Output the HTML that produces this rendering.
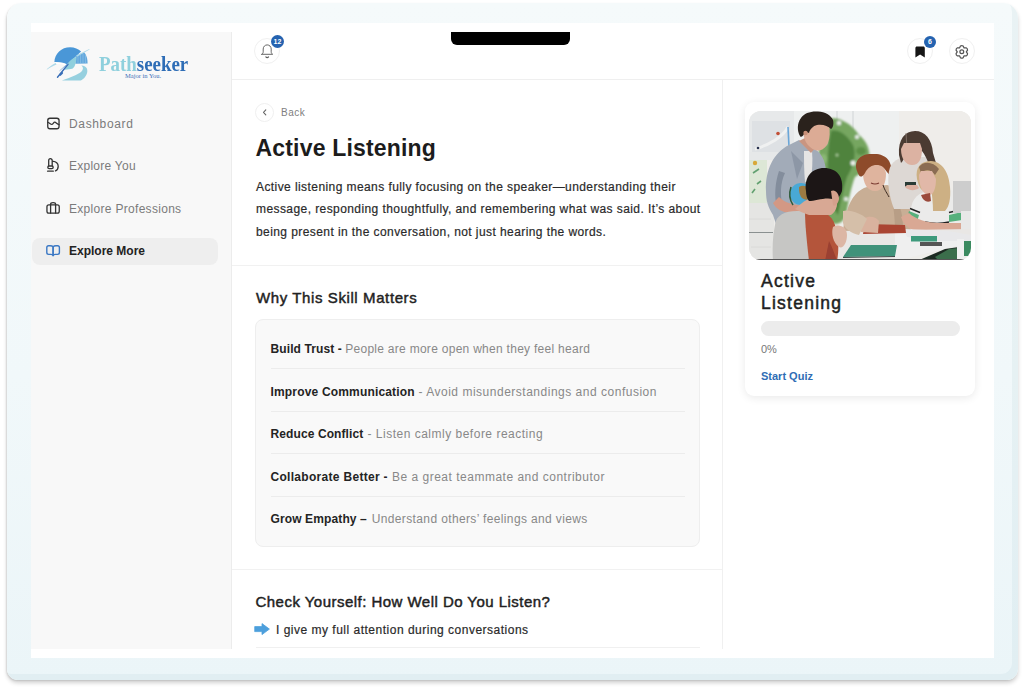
<!DOCTYPE html>
<html><head><meta charset="utf-8">
<style>
*{box-sizing:border-box;margin:0;padding:0}
html,body{width:1024px;height:690px;overflow:hidden;background:#fff;font-family:"Liberation Sans",sans-serif;color:#222}
.abs{position:absolute}
#frame{left:7px;top:3px;width:1011px;height:677px;border-radius:15px 15px 11px 11px;background:linear-gradient(#f5fafb,#f1f8fa 55%,#ebf5f8);
 box-shadow:0 3px 4px rgba(0,0,0,.18),-1px 1px 1.5px rgba(0,0,0,.09), inset -6px -6px 0 rgba(170,200,210,.15)}
#screen{left:31px;top:23px;width:963px;height:635px;background:#fff}
#side{left:31px;top:32px;width:201px;height:617px;background:#f8f8f8;border-right:1px solid #ececec}
#hdr{left:232px;top:79px;width:762px;height:1px;background:#efefef}
#notch{left:451px;top:32px;width:119px;height:13px;background:#000;border-radius:0 0 6px 6px}
.circ{border:1px solid #f0f0f0;border-radius:50%;background:#fff}
.badge{border-radius:50%;background:#2563b0;color:#fff;font-weight:bold;font-size:7px;text-align:center}
.nav{left:69px;font-size:12px;color:#7b7b7b;letter-spacing:.55px;white-space:nowrap;line-height:14px}
#vline{left:722px;top:80px;width:1px;height:569px;background:#f0f0f0}
.t{white-space:nowrap}
.rowb{left:270.5px;font-size:12px;line-height:14px;font-weight:bold;color:#242424}
.rowd{font-size:12px;line-height:14px;color:#888}
</style></head>
<body>
<div id="frame" class="abs"></div>
<div id="screen" class="abs"></div>
<div id="side" class="abs"></div>
<div id="hdr" class="abs"></div>
<div id="vline" class="abs"></div>
<div id="notch" class="abs"></div>

<!-- header buttons -->
<div class="abs circ" style="left:254px;top:38px;width:26px;height:26px"></div>
<div class="abs badge" style="left:271px;top:35px;width:13px;height:13px;line-height:13px">12</div>
<div class="abs circ" style="left:907px;top:38px;width:26px;height:26px"></div>
<div class="abs badge" style="left:924px;top:36px;width:12px;height:12px;line-height:12px">6</div>
<div class="abs circ" style="left:949px;top:38px;width:26px;height:26px"></div>

<!-- sidebar nav -->
<div class="abs" style="left:32px;top:238px;width:186px;height:27px;background:#eeeeee;border-radius:8px"></div>
<div class="abs nav" style="top:117px;letter-spacing:.65px">Dashboard</div>
<div class="abs nav" style="top:159px;letter-spacing:.25px">Explore You</div>
<div class="abs nav" style="top:202px;letter-spacing:.3px">Explore Professions</div>
<div class="abs nav" style="top:244px;color:#222;font-weight:bold;letter-spacing:0">Explore More</div>

<!-- main -->
<div class="abs circ" style="left:255px;top:103px;width:19px;height:19px"></div>
<div class="abs t" style="left:281px;top:107px;font-size:10px;color:#808080;letter-spacing:.5px">Back</div>
<div class="abs t" style="left:255.5px;top:134.5px;font-size:23px;font-weight:bold;color:#1c1c1c;letter-spacing:.18px">Active Listening</div>
<div class="abs t" style="left:256px;top:175.5px;font-size:12px;line-height:22.7px;color:#2a2a2a;letter-spacing:.42px;-webkit-text-stroke:.2px #2a2a2a">Active listening means fully focusing on the speaker—understanding their<br>message, responding thoughtfully, and remembering what was said. It’s about<br>being present in the conversation, not just hearing the words.</div>
<div class="abs" style="left:232px;top:265px;width:490px;height:1px;background:#f1f1f1"></div>
<div class="abs t" style="left:256px;top:288.5px;font-size:15px;color:#222;letter-spacing:.6px;-webkit-text-stroke:.45px #222">Why This Skill Matters</div>

<div class="abs" style="left:255px;top:319px;width:445px;height:228px;background:#f9f9f9;border:1px solid #eeeeee;border-radius:8px"></div>

<div class="abs t rowb" style="top:341.5px;letter-spacing:0.1px">Build Trust -</div><div class="abs t rowd" style="top:341.5px;left:345.2px;letter-spacing:0.28px">People are more open when they feel heard</div>
<div class="abs t rowb" style="top:384.5px;letter-spacing:0.17px">Improve Communication</div><div class="abs t rowd" style="top:384.5px;left:418.5px;letter-spacing:0.51px">- Avoid misunderstandings and confusion</div>
<div class="abs t rowb" style="top:427px;letter-spacing:0.1px">Reduce Conflict</div><div class="abs t rowd" style="top:427px;left:367.5px;letter-spacing:0.5px">- Listen calmly before reacting</div>
<div class="abs t rowb" style="top:469.5px;letter-spacing:0.3px">Collaborate Better -</div><div class="abs t rowd" style="top:469.5px;left:392.0px;letter-spacing:0.5px">Be a great teammate and contributor</div>
<div class="abs t rowb" style="top:512px;letter-spacing:0.12px">Grow Empathy –</div><div class="abs t rowd" style="top:512px;left:371.7px;letter-spacing:0.37px">Understand others’ feelings and views</div>
<div class="abs" style="left:271px;top:368px;width:414px;height:1px;background:#ececec"></div>
<div class="abs" style="left:271px;top:411px;width:414px;height:1px;background:#ececec"></div>
<div class="abs" style="left:271px;top:453px;width:414px;height:1px;background:#ececec"></div>
<div class="abs" style="left:271px;top:496px;width:414px;height:1px;background:#ececec"></div>
<div class="abs" style="left:232px;top:569px;width:490px;height:1px;background:#f1f1f1"></div>
<div class="abs t" style="left:255.5px;top:592.5px;font-size:15px;color:#222;letter-spacing:.47px;-webkit-text-stroke:.45px #222">Check Yourself: How Well Do You Listen?</div>
<div class="abs t" style="left:276px;top:623px;font-size:12px;color:#2a2a2a;letter-spacing:.5px;-webkit-text-stroke:.2px #2a2a2a">I give my full attention during conversations</div>
<div class="abs" style="left:256px;top:647px;width:444px;height:1px;background:#f0f0f0"></div>

<!-- right card -->
<div class="abs" style="left:745px;top:102px;width:230px;height:294px;background:#fff;border-radius:9px;box-shadow:0 2px 9px rgba(0,0,0,.085)"></div>
<div class="abs" id="photo" style="left:749px;top:111px;width:222px;height:149px;border-radius:12px;overflow:hidden;background:#e9e6e1"><svg width="222" height="149" viewBox="0 0 222 149" style="display:block">
<defs><filter id="bl" x="-5%" y="-5%" width="110%" height="110%"><feGaussianBlur stdDeviation="0.7"/></filter><filter id="bl2" x="-20%" y="-20%" width="140%" height="140%"><feGaussianBlur stdDeviation="0.9"/></filter></defs>
<g filter="url(#bl)">
<rect x="-3" y="-3" width="228" height="155" fill="#eeedea"/>
<rect x="44" y="-3" width="110" height="90" fill="#eef0f0"/>
<rect x="150" y="-3" width="75" height="80" fill="#efedea"/>
<path d="M88 -3 V50 M104 -3 V40" stroke="#dfe2e3" stroke-width="2"/>
<!-- whiteboard -->
<rect x="-3" y="-3" width="48" height="52" fill="#e7e9ea"/>
<rect x="3" y="10" width="38" height="31" fill="#dee1e4"/>
<path d="M6 38 C20 34 34 26 39 16" stroke="#f0f1f1" stroke-width="3" fill="none"/>
<path d="M39 16 L40 36" stroke="#6aa6d8" stroke-width="1.6"/>
<circle cx="29" cy="22.5" r="1.8" fill="#c24f36"/>
<circle cx="9" cy="37" r="1.3" fill="#2b3350"/>
<rect x="-3" y="41" width="48" height="8" fill="#e6e8e9"/>
<!-- poster -->
<rect x="-3" y="49" width="21" height="44" fill="#dde7d6"/>
<circle cx="6" cy="52" r="2.2" fill="#d8a838"/>
<path d="M4 62 L10 58 M8 73 L12 70 M3 82 L6 78" stroke="#62a070" stroke-width="1.6"/>
<!-- brick wall -->
<rect x="-3" y="92" width="28" height="60" fill="#e5e5e3"/>
<path d="M-3 121.5 H24" stroke="#8a9090" stroke-width="1"/>
<path d="M0 108 H22 M2 136 H22" stroke="#d8d8d6" stroke-width="0.8"/>
<!-- plant -->
<g filter="url(#bl2)">
<path d="M72 14 C78 6 88 6 94 10 C100 12 106 18 110 24 C118 30 122 40 120 50 C118 58 112 62 106 66 C102 76 100 88 97 104 C93 114 84 116 80 108 C76 98 72 86 72 74 C70 62 68 50 70 40 C68 30 68 22 72 14 Z" fill="#76a660"/>
<path d="M82 20 C90 18 98 24 104 34 C108 44 104 56 98 66 C94 78 92 90 89 104 C85 100 82 88 80 76 C78 60 78 40 82 20 Z" fill="#4f833e"/>
<ellipse cx="112" cy="40" rx="5" ry="4" fill="#5b8f47"/>
<ellipse cx="74" cy="48" rx="4" ry="5" fill="#8ab875"/>
<circle cx="90" cy="12" r="2.2" fill="#eef0ee"/>
<circle cx="104" cy="52" r="2.5" fill="#eef0ee"/>
<circle cx="76" cy="32" r="1.8" fill="#e8ece6"/>
<circle cx="97" cy="88" r="2" fill="#eef0ee"/>
<circle cx="78" cy="66" r="1.8" fill="#e8ece6"/>
<circle cx="114" cy="56" r="2.5" fill="#eef0ee"/>
<circle cx="108" cy="26" r="2" fill="#eef0ee"/>
<circle cx="88" cy="44" r="1.5" fill="#a8c898"/>
</g>
<!-- standing boy shirt -->
<path d="M17 80 C16 60 24 42 40 34 L50 29 L62 36 C72 40 77 50 77 62 L74 92 L56 96 L34 112 L28 116 L24 104 C19 96 17 90 17 80 Z" fill="#a2abb8"/>
<path d="M30 60 C26 72 25 86 28 96 L34 96 C31 86 31 72 36 62 Z" fill="#838d9c"/>
<path d="M42 40 L54 52 L48 68 Z" fill="#8d97a6"/>
<path d="M55 40 L63 40 C64 50 63 60 62 70 L56 71 C55 60 55 50 55 40 Z" fill="#e6e5e4"/>
<!-- standing boy head -->
<path d="M50 30 L62 42 L67 36 L58 26 Z" fill="#c99581"/>
<path d="M54 18 C54 28 58 36 66 39 C71 41 76 38 79 32 C81 27 81 20 80 14 L60 10 Z" fill="#dcab95"/>
<path d="M51 25 C48 20 48 12 52 7 C55 2 62 0 69 0.5 C76 1 82 4 84 9 C85 13 84 17 82 18 C79 15 74 13 68 14 C64 15 61 18 60 22 C58 21 56 21 55 23 C54 25 52 27 51 25 Z" fill="#2a201b"/>
<circle cx="56.5" cy="22" r="2.2" fill="#c99078"/>
<!-- arm & globe -->
<path d="M24 92 C28 100 38 104 50 100 L56 94 C46 95 36 92 30 86 Z" fill="#d39884"/>
<circle cx="52" cy="83" r="11" fill="#4aa9d6"/>
<path d="M50 76 C56 72 62 78 62 84 C60 90 56 90 52 86 C50 82 50 80 50 76 Z" fill="#9c7a42"/>
<path d="M42 76 C40 82 40 88 44 94" stroke="#2e5a3a" stroke-width="1.5" fill="none"/>
<!-- red-haired boy sweater -->
<path d="M98 100 C102 86 110 78 118 76 L138 74 C150 76 160 84 161 100 L162 124 L94 126 C94 116 95 108 98 100 Z" fill="#c8ae95"/>
<path d="M142 84 C150 90 154 100 154 118 L146 120 C146 104 144 94 142 84 Z" fill="#b89e86"/>
<!-- red-haired boy head -->
<path d="M114 62 C114 72 118 80 126 80 C134 80 137 72 137 62 L134 54 L118 54 Z" fill="#dfb49e"/>
<path d="M108 60 C104 48 114 42 124 43 C136 42 144 50 142 62 C140 66 138 60 134 56 C128 52 120 54 116 62 C112 68 110 66 108 60 Z" fill="#8e4b2c"/>
<path d="M122 72 Q126 74 130 72" stroke="#7a3a30" stroke-width="1.2" fill="none"/>
<path d="M134 74 C136 80 138 82 140 86" stroke="#3a2a22" stroke-width="1" fill="none"/>
<!-- standing girl -->
<path d="M140 60 C142 50 150 46 160 46 L182 46 C190 52 192 62 190 76 L186 98 L145 98 C140 85 138 72 140 60 Z" fill="#ddd8d4"/>
<path d="M150 44 C149 28 156 20 166 20 C176 20 183 28 184 42 L187 52 L180 54 C178 48 176 44 173 40 L158 40 C156 46 154 50 152 52 Z" fill="#4b3b33"/>
<path d="M157 22 L158 38" stroke="#8a7a6e" stroke-width="0.8"/>
<path d="M152 38 C152 48 157 54 163 54 C170 54 173 48 173 38 L171 32 L155 32 Z" fill="#dcb2a2"/>
<rect x="156" y="71" width="11" height="4.5" fill="#2a3a35"/>
<path d="M156 76 C160 80 166 80 170 77 L168 74 L158 74 Z" fill="#dcb0a0"/>
<!-- blonde girl -->
<path d="M162 100 C162 88 170 80 182 80 L200 78 C210 82 213 90 213 104 L213 118 L162 116 Z" fill="#ebebea"/>
<path d="M168 68 C166 56 172 50 182 50 C194 51 200 62 201 76 C202 88 200 96 196 100 L184 100 C184 92 183 84 182 76 L176 80 C172 80 170 76 168 68 Z" fill="#cdb084"/>
<path d="M170 56 C174 50 184 50 190 58 L186 64 C182 58 176 58 172 62 Z" fill="#8a6c52"/>
<path d="M170 64 C170 76 174 84 180 84 C185 84 187 76 187 68 L183 60 L172 60 Z" fill="#e1b8a8"/>
<path d="M172 84 C174 90 178 92 182 90 L181 82 Z" fill="#9a4a3a"/>
<path d="M160 100 L170 104 L168 111 L158 107 Z" fill="#57b07c"/>
<path d="M161 97.5 L171 101.5" stroke="#222" stroke-width="1.4"/>
<path d="M200 104 L213 101 L213 109 L200 111 Z" fill="#57b07c"/>
<path d="M200 101.5 L213 98.5" stroke="#222" stroke-width="1.4"/>
<path d="M176 111 C184 113 192 113 200 111" stroke="#222" stroke-width="1.6" fill="none"/>
<!-- arms -->
<path d="M152 106 C156 118 166 122 184 122 L212 121 L213 112 L190 112 C178 112 166 108 160 102 Z" fill="#d9a894"/>
<!-- sofa / right wall -->
<rect x="204" y="70" width="21" height="32" fill="#cdcdcd"/>
<rect x="212" y="100" width="13" height="45" fill="#e8e8e8"/>
<!-- table -->
<path d="M88 120 L222 118 L222 134 L140 150 L88 150 Z" fill="#e9e7e5"/>
<path d="M146 122 L222 124 L222 132 L150 149 L146 149 Z" fill="#efefef"/>
<path d="M155 118 L200 120 L222 124 L222 130 L190 130 L158 126 Z" fill="#e8e8ea"/>
<path d="M116 113 L156 114 L157 122 L114 123 Z" fill="#aa4432"/>
<path d="M112 112 C114 104 126 104 130 110 L129 122 L112 121 Z" fill="#d9b29e"/>
<path d="M94 100 C100 98 112 102 118 108 L110 124 C102 122 96 118 94 112 Z" fill="#d5bfa9"/>
<rect x="162" y="125" width="26" height="5.5" fill="#3e9a7c"/>
<rect x="171" y="131" width="22" height="4" fill="#545454"/>
<path d="M168 150 L196 138 L210 136 L210 150 Z" fill="#1e2a22"/>
<path d="M186 146 L200 138 L210 137 L210 150 L190 150 Z" fill="#3b6e4c"/>
<rect x="208" y="128" width="7" height="22" fill="#f0f0f0"/>
<rect x="215" y="130" width="7" height="15" fill="#3a8a60"/>
<!-- front boy -->
<path d="M26 114 C27 104 36 100 48 100 L60 100 L62 150 L24 150 C23 136 24 124 26 114 Z" fill="#c6c6c4"/>
<path d="M56 100 C70 96 82 102 86 114 C90 126 90 140 88 150 L60 150 C58 132 56 114 56 100 Z" fill="#b4553b"/>
<path d="M80 130 C84 138 86 144 88 150 L76 150 Z" fill="#9a4030"/>
<path d="M46 98 C52 92 58 88 64 86 L86 84 C90 92 88 100 82 104 L60 104 C54 102 50 100 46 98 Z" fill="#d8a894"/>
<path d="M57 80 C55 66 63 57 75 57 C88 57 95 66 93 80 C91 86 88 88 84 88 C76 86 66 90 60 90 C58 88 57 84 57 80 Z" fill="#1c1816"/>
<path d="M82 80 C86 78 90 82 90 88 C89 93 86 96 84 94 Z" fill="#d4a08c"/>
<path d="M84 116 C90 112 98 116 98 124 C98 132 94 138 90 136 C84 132 82 122 84 116 Z" fill="#dcb6a4"/>
<!-- green notebook -->
<path d="M102 134 L148 134 L146 145 L94 146 Z" fill="#3f927a"/>
<path d="M94 146.5 L146 145.5" stroke="#3a4a48" stroke-width="1.2"/>
<path d="M-3 148.5 H225" stroke="#555" stroke-width="1"/>
</g>
</svg></div>
<div class="abs t" style="left:761px;top:269.5px;font-size:17.5px;line-height:22.6px;color:#1f1f1f;letter-spacing:1.25px;-webkit-text-stroke:.5px #1f1f1f">Active<br>Listening</div>
<div class="abs" style="left:761px;top:321px;width:199px;height:15px;background:#ececec;border-radius:8px"></div>
<div class="abs t" style="left:761px;top:343px;font-size:11px;color:#777">0%</div>
<div class="abs t" style="left:761px;top:370px;font-size:11px;font-weight:bold;color:#2f6db5">Start Quiz</div>
<svg class="abs" style="left:0;top:0" width="1024" height="690" viewBox="0 0 1024 690" fill="none" stroke-linecap="round" stroke-linejoin="round">
<!-- dashboard -->
<g stroke="#333" stroke-width="1.3">
<rect x="47.75" y="118.25" width="11.3" height="10.5" rx="2.2"/>
<path d="M47.9 122.3 C49.5 122.6 50.6 124.6 52 124.4 C53.3 124.2 53.6 122.1 54.7 122.2 C56 122.3 57.2 124.3 59 124.6"/>
<!-- microscope -->
<path d="M48.7 165.6 V160.6 A1.75 1.9 0 0 1 52.2 160.6 V165.6"/>
<rect x="47.8" y="166" width="5.4" height="2.6" rx="1.3"/>
<path d="M47.6 171.2 H53.3"/>
<path d="M52.8 161.4 C56 161.2 58.2 163.6 58.2 166.2 C58.2 168.6 56.8 170.3 55.5 170.9"/>
<!-- briefcase -->
<rect x="46.95" y="204.85" width="12.3" height="8.3" rx="1.9"/>
<path d="M50.6 213.1 V204.2 C50.6 203 51.6 202.6 53.1 202.6 C54.6 202.6 55.6 203 55.6 204.2 V213.1"/>
</g>
<!-- book -->
<g stroke="#3b78c4" stroke-width="1.4">
<path d="M53.1 246.8 C52.5 246 51.5 245.8 50.2 245.8 H48.6 C47.4 245.8 46.8 246.5 46.8 247.6 V252.6 C46.8 253.7 47.4 254.4 48.6 254.4 H51 C52.2 254.4 52.9 254.8 53.1 255.6 Z"/>
<path d="M53.1 246.8 C53.7 246 54.7 245.8 56 245.8 H57.6 C58.8 245.8 59.4 246.5 59.4 247.6 V252.6 C59.4 253.7 58.8 254.4 57.6 254.4 H55.2 C54 254.4 53.3 254.8 53.1 255.6 Z"/>
</g>
<!-- bell -->
<g stroke="#5e5e5e" stroke-width=".95">
<path d="M261.8 54.3 H272.6 C271.6 53.6 271.2 52.8 271.2 51.8 V49 C271.2 46.6 269.4 44.9 267.2 44.9 C265 44.9 263.2 46.6 263.2 49 V51.8 C263.2 52.8 262.8 53.6 261.8 54.3 Z"/>
<path d="M265.8 56.9 C266.6 57.8 267.8 57.8 268.6 56.9" stroke-width="1.1"/>
</g>
<!-- bookmark -->
<path d="M915.4 48.1 C915.4 47 916 46.4 917.1 46.4 H923.1 C924.2 46.4 924.8 47 924.8 48.1 V57.4 L920.1 54.4 L915.4 57.4 Z" fill="#161616"/>
<!-- gear -->
<g stroke="#555" stroke-width="1.25">
<path d="M960.45 46.05 Q961.80 45.18 963.15 46.05 L964.07 47.96 L966.19 47.81 Q967.62 48.54 967.54 50.15 L966.35 51.90 L967.54 53.65 Q967.62 55.26 966.19 55.99 L964.07 55.84 L963.15 57.75 Q961.80 58.62 960.45 57.75 L959.52 55.84 L957.41 55.99 Q955.98 55.26 956.06 53.65 L957.25 51.90 L956.06 50.15 Q955.98 48.54 957.41 47.81 L959.52 47.96 Z"/>
<circle cx="961.8" cy="51.8" r="1.9"/>
</g>
<!-- back chevron -->
<path d="M265.8 109.8 L263.5 112.3 L265.8 114.8" stroke="#666" stroke-width="1.1"/>
<!-- arrow emoji -->
<path d="M255 626.6 H262 V623.6 L269.4 629.1 L262 634.6 V631.6 H255 Z" fill="#4d9fdc" stroke="#4d9fdc" stroke-width="0.8"/>
<!-- logo -->
<g stroke="none">
<path d="M54.4 62 C54.6 53.5 61.5 47.2 70.1 47.2 C74.6 47.2 78.4 48.8 81.1 51.5 L67.4 64.4 C63.5 62.6 59 61.8 54.4 62 Z" fill="#4a97d7"/>
<path d="M76.5 55.2 L84.4 52.6 C86.6 55.5 87.6 59 87.6 63.4 L75.3 63.7 C75.2 60.5 75.6 57.5 76.5 55.2 Z" fill="#63a8dd"/>
<path d="M78 56 V63 M80.5 55 V63 M83 54 V63 M85.5 55.5 V63" stroke="#9ccbeb" stroke-width=".5"/>
<path d="M55 62.2 C59.5 62 63.5 63 67.3 64.9 L66.5 66 C63 64.6 59.3 63.8 55.6 63.8 Z" fill="#ffffff"/>
<path d="M46.6 69.2 C49.5 66.6 52.5 64.2 55.6 62.9 L56.5 64.6 C53.5 65.8 50 67.6 47.2 69.6 Z" fill="#aed9e8"/>
<path d="M76.2 55.6 L89.2 49 L89.6 49.6 L77 56.8 Z" fill="#aed9e8"/>
<path d="M66.8 64.6 C68.6 61.8 72 58.6 76.5 56.8 C76.3 59.5 76 61.8 75.5 63.6 C75 65.8 74 67.6 72.8 68.6 C70.5 69.2 67.5 69.5 64.8 69.8 C65.4 68 66 66.2 66.8 64.6 Z" fill="#8fcfdd"/>
<path d="M61.8 80.6 L80.6 80.6 C84 79 86.8 75.5 87.3 71.7 C87.5 69.5 86.8 67.6 85 66.6 C84 66 82.6 65.6 81.3 65.5 C82.5 66.5 83.1 67.6 82.9 68.8 C82.7 70 82 71 81.3 71.7 C79.5 73.2 77.8 74.1 75.9 74.9 C71 77 66.5 78.8 61.8 80.6 Z" fill="#96d0df"/>
<path d="M57.5 77.3 L68 64.3" stroke="#3a6fb8" stroke-width="1.4" stroke-linecap="round"/><path d="M60.2 74.8 L62 73" stroke="#3a6fb8" stroke-width="2.2" stroke-linecap="round"/>
<path d="M59.8 70.6 L68.2 63.2" stroke="#7fb0d8" stroke-width=".8"/>
</g>
</svg>
<div class="abs t" style="left:98.5px;top:52px;font-family:'Liberation Serif',serif;font-weight:bold;font-size:21px;line-height:24px;transform:scaleX(.9);transform-origin:0 0"><span style="color:#8fd0dd">Path</span><span style="color:#2e6db6">seeker</span></div>
<div class="abs t" style="left:125px;top:71.5px;font-family:'Liberation Serif',serif;font-size:6.5px;line-height:7px;color:#3a70b8">Major in You.</div>
</body></html>
